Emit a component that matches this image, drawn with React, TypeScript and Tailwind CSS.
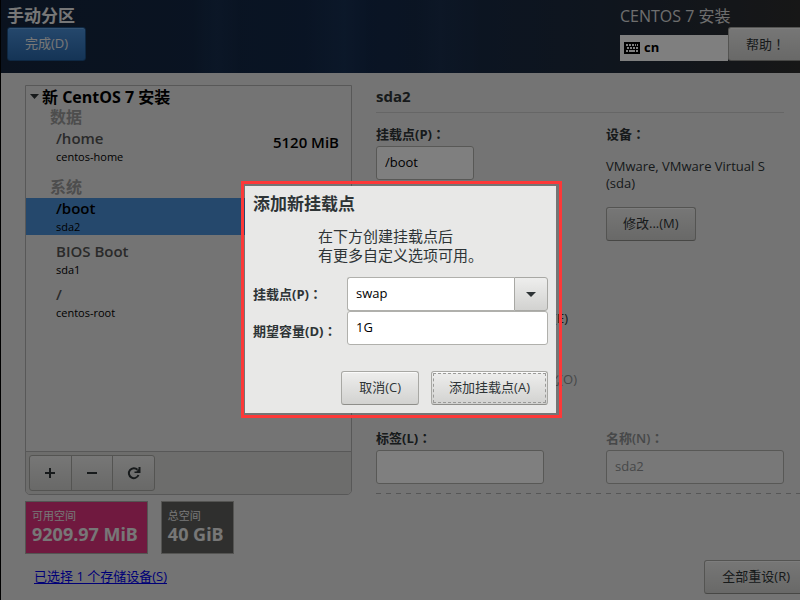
import type { ButtonHTMLAttributes, ReactNode } from 'react';
import { clsx } from 'clsx';

type Mount = { name: string; device: string; size?: string; selected?: boolean };

const dataMounts: Mount[] = [{ name: '/home', device: 'centos-home', size: '5120 MiB' }];

const systemMounts: Mount[] = [
  { name: '/boot', device: 'sda2', selected: true },
  { name: 'BIOS Boot', device: 'sda1' },
  { name: '/', device: 'centos-root' },
];

const labelClass = 'block text-[13px] leading-6 font-bold whitespace-nowrap text-[#2e3436]';
const inputClass = 'h-[34px] rounded-[3px] border border-[#b0b0ac] bg-white px-2 pb-0.5 text-[13px] text-black';

// Full-width punctuation that sits in the middle of its cell
function Mark({ children }: { children: ReactNode }) {
  return <span className="font-['Noto_Sans_CJK_JP',sans-serif]">{children}</span>;
}

function GtkButton({ className, ...props }: ButtonHTMLAttributes<HTMLButtonElement>) {
  return (
    <button
      type="button"
      className={clsx(
        'h-[34px] shrink-0 whitespace-nowrap rounded-[3px] border border-[#a8a8a4] border-b-[#8e8e8a] bg-linear-to-b from-[#eeeeed] to-[#d2d2d0] text-[13px] text-[#2e3436] shadow-[inset_0_1px_0_#fafafa]',
        className,
      )}
      {...props}
    />
  );
}

function MountRow({ mount }: { mount: Mount }) {
  return (
    <li className={clsx('flex h-[37px] justify-between pl-[30px] pr-3', mount.selected && 'bg-[#4a90d9]')}>
      <div>
        <p className={clsx('text-[15px] leading-[21px] font-semibold', mount.selected ? 'text-black' : 'text-[#555555]')}>
          {mount.name}
        </p>
        <p className="text-[11px] leading-4 text-black">{mount.device}</p>
      </div>
      {mount.size && <p className="text-[15px] leading-7 font-semibold text-black">{mount.size}</p>}
    </li>
  );
}

function SpaceBox({ label, value, className }: { label: string; value: string; className: string }) {
  return (
    <div className={clsx('h-[53px] border border-[#a8a8a4] pt-1.5 pr-[9px] pl-1.5 text-[#eeeeee]', className)}>
      <p className="text-[11px] leading-4">{label}</p>
      <p className="font-['Noto_Sans',sans-serif] text-[18px] leading-5 font-bold whitespace-nowrap">{value}</p>
    </div>
  );
}

function ToolButton({ label, children }: { label: string; children: ReactNode }) {
  return (
    <button
      type="button"
      aria-label={label}
      className="flex h-full flex-1 items-center justify-center border-r border-[#a8a8a4] last:border-r-0"
    >
      {children}
    </button>
  );
}

function KeyboardIcon() {
  return (
    <svg width="16" height="12" viewBox="0 0 16 12" shapeRendering="crispEdges" aria-hidden="true">
      <rect width="16" height="12" rx="1" fill="#000" />
      <path
        d="M2 2h2v2H2zM5 2h2v2H5zM8 2h2v2H8zM11 2h1v2h-1zM13 2h1v2h-1zM3 5h2v2H3zM6 5h2v2H6zM9 5h2v2H9zM12 5h2v2h-2zM2 8h2v2H2zM5 8h6v2H5zM12 8h2v2h-2z"
        fill="#fff"
      />
    </svg>
  );
}

function Header() {
  return (
    <header className="flex h-[73px] shrink-0 justify-between overflow-hidden bg-[linear-gradient(90deg,transparent_24%,#3a6aa018_27%,transparent_30%_38%,#3a6aa01c_43%,transparent_46%_52%,#3a6aa014_55%,transparent_60%),linear-gradient(90deg,#14253d,#13294a_45%,#1e2a3c_75%,#2e2e2e)]">
      <div className="pl-1.5 pt-1.5">
        <h1 className="text-[17px] leading-5 font-bold text-[#eeeeee]">手动分区</h1>
        <button
          type="button"
          className="mt-px h-[34px] rounded-[3px] border border-[#1c5187] bg-linear-to-b from-[#4a90d9] to-[#2a69ad] px-[17px] text-[13px] text-[#eeeeee] shadow-[inset_0_1px_0_#6aa6e4]"
        >
          完成(D)
        </button>
      </div>
      <div className="flex pt-1.5">
        <div className="w-[108px]">
          <p className="text-[16px] leading-5 whitespace-nowrap text-[#dddddd]">CENTOS 7 安装</p>
          <div className="mt-[9px] flex h-[26px] items-center gap-1 bg-white pl-1 text-[13px] font-bold">
            <KeyboardIcon />
            cn
          </div>
        </div>
        <GtkButton className="mt-[21px] -mr-[3px] px-[17px]">
          帮助<Mark>！</Mark>
        </GtkButton>
      </div>
    </header>
  );
}

function MountTree() {
  return (
    <section className="flex h-[410px] flex-col rounded-b-[5px] border border-[#b0b0b0]">
      <div className="flex-1">
        <h2 className="flex h-[21px] items-center gap-[3px] pl-1 text-[16px] font-bold text-black">
          <svg width="9" height="5" viewBox="0 0 9 5" aria-hidden="true">
            <path d="M0 0h9L4.500 5z" fill="#2e3436" />
          </svg>
          新 CentOS 7 安装
        </h2>
        <h3 className="pl-6 text-[16px] leading-[21px] font-semibold text-[#9a9a9a]">数据</h3>
        <ul>
          {dataMounts.map((mount) => (
            <MountRow key={mount.name} mount={mount} />
          ))}
        </ul>
        <h3 className="mt-3 pl-6 text-[16px] leading-[21px] font-semibold text-[#9a9a9a]">系统</h3>
        <ul className="flex flex-col gap-1.5">
          {systemMounts.map((mount) => (
            <MountRow key={mount.name} mount={mount} />
          ))}
        </ul>
      </div>
      <div className="flex h-[43px] rounded-b-[4px] border-t border-[#b0b0b0] bg-[#dbdad8] p-[3px]">
        <div className="flex h-9 w-[126px] rounded-[3px] border border-[#a8a8a4] bg-linear-to-b from-[#eeeeed] to-[#d2d2d0]">
          <ToolButton label="添加">
            <svg width="10" height="10" viewBox="0 0 10 10" aria-hidden="true">
              <path d="M4 0h2v4h4v2H6v4H4V6H0V4h4z" fill="#2e3436" />
            </svg>
          </ToolButton>
          <ToolButton label="删除">
            <svg width="10" height="10" viewBox="0 0 10 10" aria-hidden="true">
              <path d="M0 4h10v2H0z" fill="#2e3436" />
            </svg>
          </ToolButton>
          <ToolButton label="刷新">
            <svg width="14" height="14" viewBox="0 0 14 14" aria-hidden="true">
              <path d="M10.500 3.700A5 5 0 1 0 11.500 9" fill="none" stroke="#2e3436" strokeWidth="2" />
              <path d="M13.500 1v6H7.500V5.500H9.500L11.500 3V1z" fill="#2e3436" />
            </svg>
          </ToolButton>
        </div>
      </div>
    </section>
  );
}

function MountDetails() {
  return (
    <section className="min-w-0 flex-1">
      <h2 className="mr-4 h-7 border-b border-[#cccccc] text-[15px] leading-[22px] font-bold text-[#2e3436]">sda2</h2>
      <div className="mt-[9px] grid grid-cols-[230px_1fr]">
        <div>
          <label htmlFor="mount-point" className={labelClass}>
            挂载点(P)<Mark>：</Mark>
          </label>
          <input id="mount-point" defaultValue="/boot" className={clsx(inputClass, 'w-[98px]')} />
        </div>
        <div className="mr-4">
          <h3 className={labelClass}>
            设备<Mark>：</Mark>
          </h3>
          <p className="mt-3 text-[13px] leading-[17px] text-[#2e3436]">
            VMware, VMware Virtual S
            <br />
            (sda)
          </p>
          <GtkButton className="mt-[15px] px-4">修改...(M)</GtkButton>
        </div>
      </div>
      <div className="mt-[67px] flex w-[201px] flex-col items-end gap-[41px] text-[13px] leading-5">
        <label className="mr-[9px] flex items-center gap-1.5 text-[#2e3436]">
          <input type="checkbox" />
          加密(E)
        </label>
        <label className="flex items-center gap-1.5 text-[#8e9192]">
          <input type="checkbox" disabled />
          重新格式化(O)
        </label>
      </div>
      <div className="mt-[37px] grid grid-cols-[230px_1fr] pb-[9px]">
        <div>
          <label htmlFor="fs-label" className={labelClass}>
            标签(L)<Mark>：</Mark>
          </label>
          <input id="fs-label" className={clsx(inputClass, 'w-[168px]')} />
        </div>
        <div className="mr-4">
          <label htmlFor="fs-name" className="block text-[13px] leading-6 font-semibold text-[#8e9192]">
            名称(N)<Mark>：</Mark>
          </label>
          <input
            id="fs-name"
            defaultValue="sda2"
            disabled
            className="h-[34px] w-full rounded-[3px] border border-[#b0b0ac] bg-[#f0f0f0] px-2 pb-0.5 text-[13px] text-[#8e9192]"
          />
        </div>
      </div>
      <div className="h-px bg-[repeating-linear-gradient(90deg,#acacac_0_5px,transparent_5px_10px)]" />
    </section>
  );
}

function AddMountDialog() {
  return (
    <div className="fixed inset-0 left-px flex items-center justify-center bg-black/50 pb-px pl-0.5">
      <div className="w-[321px] border-3 border-[#fd3838] pt-0.5 pr-[3px] pb-0.5 pl-px">
        <form
          role="dialog"
          aria-labelledby="dialog-title"
          className="bg-[#e8e8e7] px-2 pt-2 pb-2 text-[#2e3436]"
          onSubmit={(event) => event.preventDefault()}
        >
          <h2 id="dialog-title" className="text-[17px] leading-5 font-bold">
            添加新挂载点
          </h2>
          <p className="mx-auto mt-[13px] w-[165px] text-[15px] leading-[19px] whitespace-nowrap">
            在下方创建挂载点后
            <br />
            有更多自定义选项可用。
          </p>
          <div className="mt-3 grid grid-cols-[94px_minmax(0,1fr)] items-center">
            <label htmlFor="new-mount" className={labelClass}>
              挂载点(P)<Mark>：</Mark>
            </label>
            <div className="flex">
              <input
                id="new-mount"
                defaultValue="swap"
                className="h-[34px] min-w-0 flex-1 rounded-l-[3px] border border-r-0 border-[#b0b0ac] bg-white px-2 pb-0.5 text-[13px] text-black"
              />
              <button
                type="button"
                aria-label="选择挂载点"
                className="flex h-[34px] w-[34px] items-center justify-center rounded-r-[3px] border border-[#a8a8a4] bg-linear-to-b from-[#eeeeed] to-[#d2d2d0]"
              >
                <svg width="10" height="5" viewBox="0 0 10 5" aria-hidden="true">
                  <path d="M0 0h10L5 5z" fill="#2e3436" />
                </svg>
              </button>
            </div>
            <label htmlFor="new-size" className={clsx(labelClass, 'pt-1.5')}>
              期望容量(D)<Mark>：</Mark>
            </label>
            <input id="new-size" defaultValue="1G" className={clsx(inputClass, 'w-full')} />
          </div>
          <div className="mt-[26px] flex justify-end gap-3">
            <GtkButton className="px-[17px]">取消(C)</GtkButton>
            <GtkButton type="submit" className="px-[17px] outline outline-dashed outline-[#9a9a98] -outline-offset-3">
              添加挂载点(A)
            </GtkButton>
          </div>
        </form>
      </div>
    </div>
  );
}

export default function App() {
  return (
    <div className="flex min-h-screen flex-col overflow-hidden bg-black pl-px font-['Open_Sans','Noto_Sans_CJK_SC',sans-serif]">
      <Header />
      <main className="flex flex-1 flex-col bg-[#e8e8e8] pt-3 pl-6">
        <div className="flex gap-6">
          <div className="w-[327px] shrink-0">
            <MountTree />
            <div className="mt-1.5 flex gap-[13px]">
              <SpaceBox label="可用空间" value="9209.97 MiB" className="bg-[#e0337f]" />
              <SpaceBox label="总空间" value="40 GiB" className="bg-[#5f5f5d]" />
            </div>
          </div>
          <MountDetails />
        </div>
        <footer className="mt-1.5 flex items-center justify-between pl-[9px]">
          <a href="#storage" className="text-[13px] text-[#0000ee] underline underline-offset-2">
            已选择 1 个存储设备(S)
          </a>
          <GtkButton className="-mr-2 px-[17px]">全部重设(R)</GtkButton>
        </footer>
      </main>
      <AddMountDialog />
    </div>
  );
}
